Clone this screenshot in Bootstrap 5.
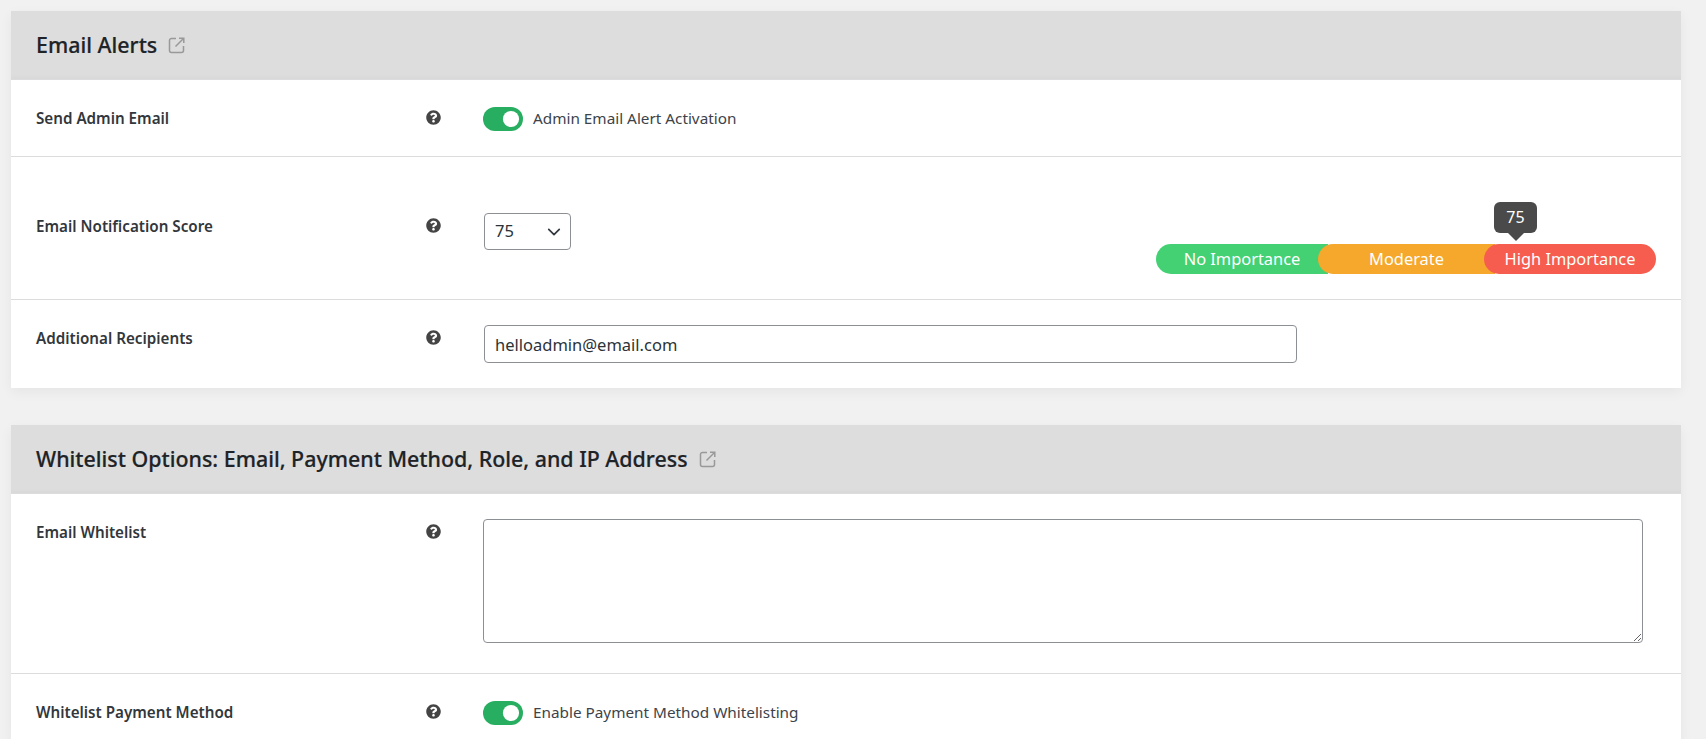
<!DOCTYPE html>
<html lang="en">
<head>
<meta charset="utf-8">
<title>Settings</title>
<link href="https://cdn.jsdelivr.net/npm/bootstrap@5.3.0/dist/css/bootstrap.min.css" rel="stylesheet">
<style>
html,body{height:739px;overflow:hidden}
body{background:#f1f1f1;font-family:"Noto Sans","Open Sans",sans-serif;color:#3c434a;padding:11px 25px 0 11px}
.panel{background:#fff;box-shadow:0 4px 12px rgba(0,0,0,.05);margin-bottom:37px}
.panel:last-of-type{margin-bottom:0}
.panel:last-of-type .set-row:last-child{padding-bottom:17px}
.panel-head{background:#ddd;height:68px;padding:0 25px;box-shadow:inset 0 -6px 6px -6px rgba(0,0,0,.04)}
.panel-title{font-size:21.4px;font-weight:500;color:#1d2327;margin:0;-webkit-text-stroke:.2px #1d2327}
.ext-ico{width:17px;height:17px;color:#999;margin-left:11px;flex:none}
.set-row{display:grid;grid-template-columns:389px 58px 1fr;padding:25px;border-top:1px solid #dcdcde}
.set-row:first-of-type{border-top:0}
.set-label{font-size:15.2px;font-weight:600;line-height:26px;color:#32373c}
.help-ico{width:15px;height:15px;color:#444;margin:5px 0 0 1px}
.drop-31{margin-top:31px}
.help-ico.drop-31{margin-top:36px}
.form-switch.sw{padding-left:0;min-height:24px;margin:1px 0 0;gap:10px}
.form-switch.sw .form-check-input{width:40px;height:24px;margin:0;float:none;border:0;background-color:#27ae60;
background-image:url("data:image/svg+xml,%3csvg xmlns='http://www.w3.org/2000/svg' viewBox='-4 -4 8 8'%3e%3ccircle r='2.7' fill='%23fff'/%3e%3c/svg%3e");background-position:right center;box-shadow:none}
.sw-label{font-size:15.3px;color:#3c434a}
.score-wrap{min-height:92px}
.score-sel{width:87px;height:37px;padding:0 10px;font-size:16.5px;color:#2c3338;border-color:#8c8f94;border-radius:4px;margin:31px 0 0 1px;background-position:right 7px center;background-size:18px 14px}
.text-in{width:813px;height:38px;margin-left:1px;padding:0 10px;font-size:16.5px;color:#2c3338;border-color:#8c8f94;border-radius:4px}
.area-in{width:1160px;height:124px;margin-bottom:5px;border-color:#8c8f94;border-radius:4px;display:block}
.scale-wrap{width:500px;position:relative;margin-left:auto;align-self:flex-end}
.seg{height:30px;border-radius:15px 0 0 15px;color:#fff;font-size:16.4px;line-height:30px;text-align:center;position:relative}
.seg-a{width:172px;background:#43d174}
.seg-b{width:177px;background:#f5a82c;margin-left:-10px}
.seg-c{width:172px;background:#f65d4e;margin-left:-11px;border-radius:15px}
.tip{position:absolute;left:338px;top:-42px;width:43px;height:31px;background:#4a4a4a;color:#fff;border-radius:6px;font-size:16px;line-height:31px;text-align:center}
.tip::after{content:"";position:absolute;left:14px;top:31px;border:8px solid transparent;border-top-color:#4a4a4a;border-bottom:0}
</style>
</head>
<body>
<section class="panel">
  <div class="panel-head d-flex align-items-center">
    <h2 class="panel-title">Email Alerts</h2>
    <svg class="ext-ico" viewBox="0 0 17 17" fill="none" stroke="currentColor" stroke-width="1.5"><path d="M8 1.5H3.5a2 2 0 0 0-2 2v10a2 2 0 0 0 2 2h10a2 2 0 0 0 2-2V9"/><path d="M7.5 9.5 15.5 1.5M11 1.2h4.8V6"/></svg>
  </div>
  <div class="set-row">
    <div class="set-label">Send Admin Email</div>
    <svg class="help-ico" viewBox="0 0 512 512" fill="currentColor"><path d="M504 256c0 136.997-111.043 248-248 248S8 392.997 8 256C8 119.083 119.043 8 256 8s248 111.083 248 248zM262.655 90c-54.497 0-89.255 22.957-116.549 63.758-3.536 5.286-2.353 12.415 2.715 16.258l34.699 26.31c5.205 3.947 12.621 3.008 16.665-2.122 17.864-22.658 30.113-35.797 57.303-35.797 20.429 0 45.698 13.148 45.698 32.958 0 14.976-12.363 22.667-32.534 33.976C247.128 238.528 216 254.941 216 296v4c0 6.627 5.373 12 12 12h56c6.627 0 12-5.373 12-12v-1.333c0-28.462 83.186-29.647 83.186-106.667 0-58.002-60.165-102-116.531-102zM256 338c-25.365 0-46 20.635-46 46 0 25.364 20.635 46 46 46s46-20.636 46-46c0-25.365-20.635-46-46-46z"/></svg>
    <div class="form-check form-switch sw d-flex align-items-center">
      <input class="form-check-input" type="checkbox" role="switch" id="s1" checked>
      <label class="sw-label" for="s1">Admin Email Alert Activation</label>
    </div>
  </div>
  <div class="set-row">
    <div class="set-label drop-31">Email Notification Score</div>
    <svg class="help-ico drop-31" viewBox="0 0 512 512" fill="currentColor"><path d="M504 256c0 136.997-111.043 248-248 248S8 392.997 8 256C8 119.083 119.043 8 256 8s248 111.083 248 248zM262.655 90c-54.497 0-89.255 22.957-116.549 63.758-3.536 5.286-2.353 12.415 2.715 16.258l34.699 26.31c5.205 3.947 12.621 3.008 16.665-2.122 17.864-22.658 30.113-35.797 57.303-35.797 20.429 0 45.698 13.148 45.698 32.958 0 14.976-12.363 22.667-32.534 33.976C247.128 238.528 216 254.941 216 296v4c0 6.627 5.373 12 12 12h56c6.627 0 12-5.373 12-12v-1.333c0-28.462 83.186-29.647 83.186-106.667 0-58.002-60.165-102-116.531-102zM256 338c-25.365 0-46 20.635-46 46 0 25.364 20.635 46 46 46s46-20.636 46-46c0-25.365-20.635-46-46-46z"/></svg>
    <div class="score-wrap d-flex align-items-start">
      <select class="form-select score-sel" aria-label="Score"><option>75</option></select>
      <div class="scale-wrap d-flex">
        <div class="seg seg-a">No Importance</div>
        <div class="seg seg-b">Moderate</div>
        <div class="seg seg-c">High Importance</div>
        <div class="tip">75</div>
      </div>
    </div>
  </div>
  <div class="set-row">
    <div class="set-label">Additional Recipients</div>
    <svg class="help-ico" viewBox="0 0 512 512" fill="currentColor"><path d="M504 256c0 136.997-111.043 248-248 248S8 392.997 8 256C8 119.083 119.043 8 256 8s248 111.083 248 248zM262.655 90c-54.497 0-89.255 22.957-116.549 63.758-3.536 5.286-2.353 12.415 2.715 16.258l34.699 26.31c5.205 3.947 12.621 3.008 16.665-2.122 17.864-22.658 30.113-35.797 57.303-35.797 20.429 0 45.698 13.148 45.698 32.958 0 14.976-12.363 22.667-32.534 33.976C247.128 238.528 216 254.941 216 296v4c0 6.627 5.373 12 12 12h56c6.627 0 12-5.373 12-12v-1.333c0-28.462 83.186-29.647 83.186-106.667 0-58.002-60.165-102-116.531-102zM256 338c-25.365 0-46 20.635-46 46 0 25.364 20.635 46 46 46s46-20.636 46-46c0-25.365-20.635-46-46-46z"/></svg>
    <input class="form-control text-in" type="text" value="helloadmin@email.com" aria-label="Recipients">
  </div>
</section>
<section class="panel">
  <div class="panel-head d-flex align-items-center">
    <h2 class="panel-title">Whitelist Options: Email, Payment Method, Role, and IP Address</h2>
    <svg class="ext-ico" viewBox="0 0 17 17" fill="none" stroke="currentColor" stroke-width="1.5"><path d="M8 1.5H3.5a2 2 0 0 0-2 2v10a2 2 0 0 0 2 2h10a2 2 0 0 0 2-2V9"/><path d="M7.5 9.5 15.5 1.5M11 1.2h4.8V6"/></svg>
  </div>
  <div class="set-row">
    <div class="set-label">Email Whitelist</div>
    <svg class="help-ico" viewBox="0 0 512 512" fill="currentColor"><path d="M504 256c0 136.997-111.043 248-248 248S8 392.997 8 256C8 119.083 119.043 8 256 8s248 111.083 248 248zM262.655 90c-54.497 0-89.255 22.957-116.549 63.758-3.536 5.286-2.353 12.415 2.715 16.258l34.699 26.31c5.205 3.947 12.621 3.008 16.665-2.122 17.864-22.658 30.113-35.797 57.303-35.797 20.429 0 45.698 13.148 45.698 32.958 0 14.976-12.363 22.667-32.534 33.976C247.128 238.528 216 254.941 216 296v4c0 6.627 5.373 12 12 12h56c6.627 0 12-5.373 12-12v-1.333c0-28.462 83.186-29.647 83.186-106.667 0-58.002-60.165-102-116.531-102zM256 338c-25.365 0-46 20.635-46 46 0 25.364 20.635 46 46 46s46-20.636 46-46c0-25.365-20.635-46-46-46z"/></svg>
    <textarea class="form-control area-in" aria-label="Email whitelist"></textarea>
  </div>
  <div class="set-row">
    <div class="set-label">Whitelist Payment Method</div>
    <svg class="help-ico" viewBox="0 0 512 512" fill="currentColor"><path d="M504 256c0 136.997-111.043 248-248 248S8 392.997 8 256C8 119.083 119.043 8 256 8s248 111.083 248 248zM262.655 90c-54.497 0-89.255 22.957-116.549 63.758-3.536 5.286-2.353 12.415 2.715 16.258l34.699 26.31c5.205 3.947 12.621 3.008 16.665-2.122 17.864-22.658 30.113-35.797 57.303-35.797 20.429 0 45.698 13.148 45.698 32.958 0 14.976-12.363 22.667-32.534 33.976C247.128 238.528 216 254.941 216 296v4c0 6.627 5.373 12 12 12h56c6.627 0 12-5.373 12-12v-1.333c0-28.462 83.186-29.647 83.186-106.667 0-58.002-60.165-102-116.531-102zM256 338c-25.365 0-46 20.635-46 46 0 25.364 20.635 46 46 46s46-20.636 46-46c0-25.365-20.635-46-46-46z"/></svg>
    <div class="form-check form-switch sw d-flex align-items-center">
      <input class="form-check-input" type="checkbox" role="switch" id="s2" checked>
      <label class="sw-label" for="s2">Enable Payment Method Whitelisting</label>
    </div>
  </div>
</section>
<script src="https://cdn.jsdelivr.net/npm/bootstrap@5.3.0/dist/js/bootstrap.bundle.min.js"></script>
</body>
</html>
